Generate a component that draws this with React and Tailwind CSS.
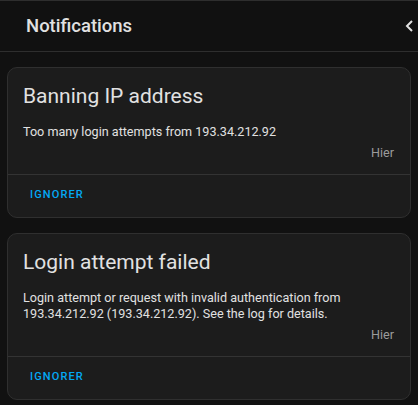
const notifications = [
  {
    id: 'ban',
    title: 'Banning IP address',
    message: 'Too many login attempts from 193.34.212.92',
    when: 'Hier',
  },
  {
    id: 'login',
    title: 'Login attempt failed',
    message:
      'Login attempt or request with invalid authentication from 193.34.212.92 (193.34.212.92). See the log for details.',
    when: 'Hier',
  },
];

function NotificationCard({ title, message, when }) {
  return (
    <div className="bg-[#1c1c1c] border border-[#2f2f2f] rounded-[10px] overflow-hidden">
      <div className="px-[15px] pt-[12px] pb-[13px]">
        <h2 className="text-[21px] leading-[32px] text-[#e1e1e1] font-normal">{title}</h2>
        <p className="mt-[12px] text-[12.6px] leading-[16px] text-[#e1e1e1] pr-[20px]">{message}</p>
        <div className="mt-[5px] text-right text-[12.6px] leading-[16px] text-[#9b9b9b] pr-[1px]">{when}</div>
      </div>
      <div className="border-t border-[#333333] px-[22px] pt-[12px] pb-[14px] flex">
        <button className="text-[11px] leading-[16px] font-medium tracking-[0.1em] uppercase text-[#03a9f4]">
          Ignorer
        </button>
      </div>
    </div>
  );
}

export default function App() {
  return (
    <div className="w-[418px] h-[405px] bg-[#111111] overflow-hidden font-['Roboto',sans-serif]">
      <div className="h-[52px] border-t border-b border-[#2e2e2e] flex items-center justify-between pl-[26px] pr-[4px]">
        <h1 className="text-[18.5px] leading-[24px] font-medium text-[#e1e1e1] pb-[1px]">Notifications</h1>
        <svg width="10" height="14" viewBox="0 0 10 14" fill="none" stroke="#e1e1e1" strokeWidth="2">
          <path d="M8 2 L3 7 L8 12" />
        </svg>
      </div>
      <div className="px-[7px] pt-[15px] flex flex-col gap-[15px]">
        {notifications.map((n) => (
          <NotificationCard key={n.id} {...n} />
        ))}
      </div>
    </div>
  );
}
